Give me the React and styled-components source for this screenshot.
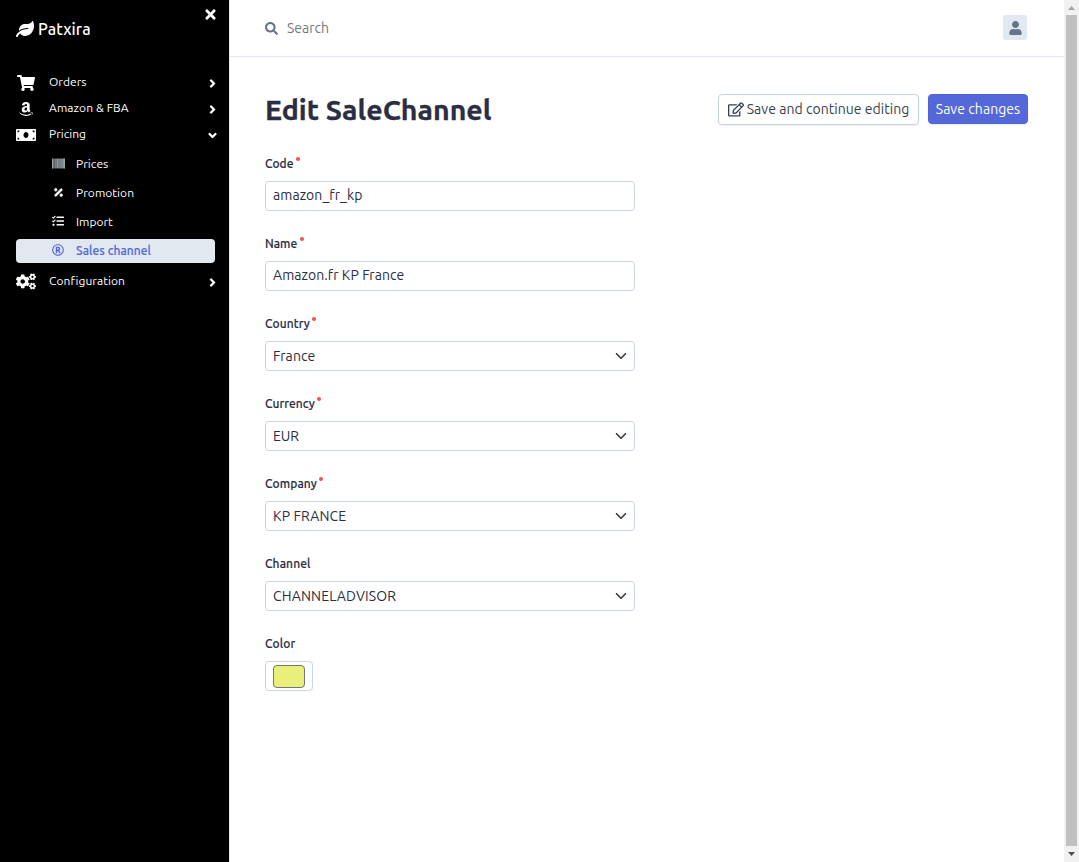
import React from 'react';
import styled, { createGlobalStyle } from 'styled-components';
import {
  FaLeaf, FaTimes, FaShoppingCart, FaAmazon, FaMoneyBill, FaCogs, FaBarcode, FaPercentage,
  FaTasks, FaRegRegistered, FaSearch, FaUser, FaRegEdit, FaAngleRight, FaAngleDown,
} from 'react-icons/fa';

const GlobalStyle = createGlobalStyle`
  *, *::before, *::after { box-sizing: border-box; }
  body {
    margin: 0;
    background: #fff;
    color: #2b2d42;
    font-family: Ubuntu, "Noto Sans", "Open Sans", sans-serif;
    font-size: 14px;
    overflow: hidden;
  }
  button, input { font: inherit; }
`;

const Shell = styled.div`
  display: flex;
  height: 862px;
  width: 1079px;
`;

const Label = styled.span`
  letter-spacing: ${(p) => p.$track || 0}px;
  white-space: nowrap;
`;

const Sidebar = styled.aside`
  width: 229px;
  flex: none;
  display: flex;
  flex-direction: column;
  background: #000;
  color: #fff;
  padding: 7px 14px 0 16px;
`;

const CloseRow = styled.div`
  display: flex;
  justify-content: flex-end;
  height: 15px;
  font-size: 15px;
  margin-right: -3px;
`;

const Brand = styled.div`
  display: flex;
  align-items: center;
  gap: 4px;
  height: 24px;
  margin: -5px 0 27px;
  font-size: 16px;
  font-weight: 500;
  svg { width: 18px; height: 18px; }
`;

const MenuItem = styled.div`
  display: flex;
  align-items: center;
  height: 26px;
  font-size: 12px;
`;

const MenuIcon = styled.span`
  display: flex;
  justify-content: center;
  width: 20px;
  margin: 3px 13px 0 0;
  svg { flex: none; width: ${(p) => p.$w}px; height: ${(p) => p.$h}px; }
`;

const Arrow = styled.span`
  display: flex;
  margin: 4px -4px 0 auto;
  svg { width: 13px; height: 13px; stroke: currentColor; stroke-width: 10px; }
`;

const SubMenu = styled.div`
  display: flex;
  flex-direction: column;
  gap: 5px;
  padding: 6px 0 4px;
`;

const SubItem = styled.div`
  display: flex;
  align-items: center;
  width: 199px;
  height: 24px;
  padding: 0 0 2px 35px;
  border-radius: 4px;
  font-size: 12px;
  font-weight: ${(p) => (p.$active ? 500 : 400)};
  -webkit-text-stroke: ${(p) => (p.$active ? 0.15 : 0)}px currentColor;
  background: ${(p) => (p.$active ? '#e2e8f0' : 'transparent')};
  color: ${(p) => (p.$active ? '#5468d8' : '#fff')};
`;

const SubIcon = styled.span`
  display: flex;
  justify-content: center;
  width: 14px;
  margin: 0 11px 0 0;
  color: ${(p) => p.$tone || 'inherit'};
  svg {
    width: ${(p) => p.$size}px;
    height: ${(p) => p.$size}px;
    stroke: currentColor;
    stroke-width: ${(p) => p.$stroke || 0}px;
  }
`;

const Main = styled.main`
  width: 835px;
  flex: none;
  border-left: 1px solid #e2e8f0;
`;

const TopBar = styled.header`
  display: flex;
  align-items: center;
  justify-content: space-between;
  height: 57px;
  padding: 0 37px 1px 35px;
  border-bottom: 1px solid #e2e8f0;
`;

const Search = styled.div`
  display: flex;
  align-items: center;
  gap: 9px;
  padding-top: 1px;
  color: #737880;
  svg { width: 13px; height: 13px; color: #64748b; }
`;

const Avatar = styled.div`
  display: flex;
  align-items: center;
  justify-content: center;
  width: 24px;
  height: 25px;
  border-radius: 3px;
  background: #e2e8f0;
  color: #64748b;
  svg { width: 13px; height: 14px; }
`;

const PageHead = styled.div`
  display: flex;
  align-items: center;
  justify-content: space-between;
  height: 31px;
  margin: 37px 36px 30px 35px;
`;

const Title = styled.h1`
  margin: 0;
  font-size: 28.5px;
  line-height: 31px;
  font-weight: 700;
  -webkit-text-stroke: 0.3px currentColor;
`;

const Actions = styled.div`
  display: flex;
  gap: 9px;
`;

const Button = styled.button`
  display: flex;
  align-items: center;
  justify-content: center;
  gap: 3px;
  width: ${(p) => (p.$primary ? 100 : 201)}px;
  height: ${(p) => (p.$primary ? 30 : 31)}px;
  padding: 0 0 1px;
  border: 1px solid ${(p) => (p.$primary ? '#4f63d2' : '#cbd5e1')};
  border-radius: 4px;
  background: ${(p) => (p.$primary ? '#5468d8' : '#fff')};
  color: ${(p) => (p.$primary ? '#fff' : '#374151')};
  box-shadow: 0 1px 2px rgba(0, 0, 0, 0.08);
  svg { width: 16px; height: 15px; }
`;

const Form = styled.form`
  display: flex;
  flex-direction: column;
  gap: 24px;
  padding-left: 35px;
`;

const Field = styled.div`
  display: flex;
  flex-direction: column;
  height: 56px;
`;

const FieldLabel = styled.label`
  display: flex;
  align-items: center;
  height: 16px;
  margin-bottom: 10px;
  font-size: 12px;
  font-weight: 500;
  -webkit-text-stroke: 0.15px currentColor;
`;

const Required = styled.span`
  width: 4px;
  height: 4px;
  margin: 0 0 8px 2.5px;
  border-radius: 50%;
  background: #ee5353;
`;

const Control = styled.div`
  display: flex;
  align-items: center;
  justify-content: space-between;
  width: ${(p) => (p.$swatch ? 48 : 370)}px;
  height: 30px;
  padding: 0 7px ${(p) => (p.$raised ? 2 : 0)}px;
  border: 1px solid #cbd5e1;
  border-radius: 4px;
  background: #fff;
`;

const Swatch = styled.div`
  width: 32px;
  height: 23px;
  border: 1px solid #767676;
  border-radius: 4px;
  background: #e9f07a;
`;

const ScrollTrack = styled.div`
  display: flex;
  flex-direction: column;
  align-items: center;
  width: 15px;
  flex: none;
  background: #f1f1f1;
`;

const ScrollEnd = styled.div`
  display: flex;
  align-items: center;
  justify-content: center;
  height: ${(p) => p.$h}px;
  flex: none;
`;

const Thumb = styled.div`
  width: 11px;
  flex: 1;
  background: #c1c1c1;
`;

const Chevron = () => (
  <svg width="12" height="12" viewBox="0 0 16 16" fill="none" stroke="#343a40" strokeWidth="2.2" strokeLinecap="round" strokeLinejoin="round">
    <path d="m2 5 6 6 6-6" />
  </svg>
);

const menu = [
  { text: 'Orders', icon: FaShoppingCart, w: 18, h: 16, track: 0.05 },
  { text: 'Amazon & FBA', icon: FaAmazon, w: 16, h: 16, track: 0.08 },
  { text: 'Pricing', icon: FaMoneyBill, w: 20, h: 16, track: 0, open: true },
];

const pricing = [
  { text: 'Prices', icon: FaBarcode, size: 13, track: 0.05, tone: '#b7c0c9', stroke: 10 },
  { text: 'Promotion', icon: FaPercentage, size: 11, track: 0.05, stroke: 24 },
  { text: 'Import', icon: FaTasks, size: 12, track: 0 },
  { text: 'Sales channel', icon: FaRegRegistered, size: 12, track: 0.07, active: true },
];

const fields = [
  { label: 'Code', required: true, value: 'amazon_fr_kp', track: 0.07 },
  { label: 'Name', required: true, value: 'Amazon.fr KP France', track: 0.07 },
  { label: 'Country', labelTrack: 0.08, required: true, value: 'France', track: 0.1, select: true },
  { label: 'Currency', labelTrack: 0.08, required: true, value: 'EUR', select: true },
  { label: 'Company', labelTrack: 0.1, required: true, value: 'KP FRANCE', track: 0.12, select: true },
  { label: 'Channel', labelTrack: 0.12, value: 'CHANNELADVISOR', track: 0.15, select: true },
];

function MenuEntry({ text, icon: Icon, w, h, track, open }) {
  return (
    <MenuItem>
      <MenuIcon $w={w} $h={h}><Icon /></MenuIcon>
      <Label $track={track}>{text}</Label>
      <Arrow>{open ? <FaAngleDown /> : <FaAngleRight />}</Arrow>
    </MenuItem>
  );
}

export default function App() {
  return (
    <Shell>
      <GlobalStyle />
      <Sidebar>
        <CloseRow><FaTimes /></CloseRow>
        <Brand><FaLeaf /><Label $track={0.1}>Patxira</Label></Brand>
        {menu.map((m) => <MenuEntry key={m.text} {...m} />)}
        <SubMenu>
          {pricing.map(({ text, icon: Icon, size, track, tone, stroke, active }) => (
            <SubItem key={text} $active={active}>
              <SubIcon $size={size} $tone={tone} $stroke={stroke}><Icon /></SubIcon>
              <Label $track={track}>{text}</Label>
            </SubItem>
          ))}
        </SubMenu>
        <MenuEntry text="Configuration" icon={FaCogs} w={20} h={17} track={0.06} />
      </Sidebar>
      <Main>
        <TopBar>
          <Search><FaSearch /><Label>Search</Label></Search>
          <Avatar><FaUser /></Avatar>
        </TopBar>
        <PageHead>
          <Title><Label>Edit SaleChannel</Label></Title>
          <Actions>
            <Button><FaRegEdit /><Label $track={0.04}>Save and continue editing</Label></Button>
            <Button $primary><Label $track={0.06}>Save changes</Label></Button>
          </Actions>
        </PageHead>
        <Form>
          {fields.map((f) => (
            <Field key={f.label}>
              <FieldLabel><Label $track={f.labelTrack}>{f.label}</Label>{f.required && <Required />}</FieldLabel>
              <Control $raised={!f.select}>
                <Label $track={f.track}>{f.value}</Label>
                {f.select && <Chevron />}
              </Control>
            </Field>
          ))}
          <Field>
            <FieldLabel><Label $track={0.1}>Color</Label></FieldLabel>
            <Control $swatch><Swatch /></Control>
          </Field>
        </Form>
      </Main>
      <ScrollTrack>
        <ScrollEnd $h={15}><svg width="7" height="4"><path d="M0 4 3.5 0 7 4z" fill="#a3a3a3" /></svg></ScrollEnd>
        <Thumb />
        <ScrollEnd $h={16}><svg width="7" height="4"><path d="M0 0h7L3.5 4z" fill="#505050" /></svg></ScrollEnd>
      </ScrollTrack>
    </Shell>
  );
}
